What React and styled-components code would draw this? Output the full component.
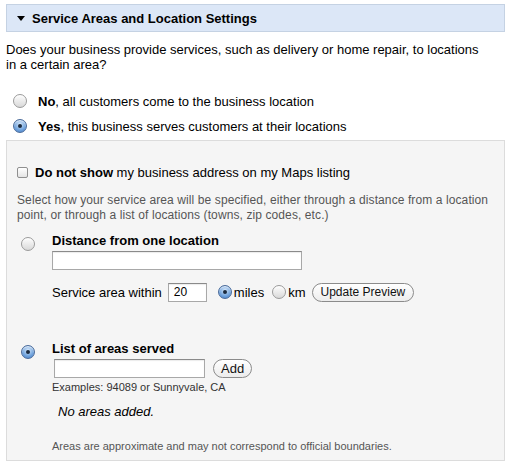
import React from "react";
import styled, { createGlobalStyle, css } from "styled-components";

const GlobalStyle = createGlobalStyle`
    html, body {
        margin: 0;
        padding: 0;
        background: #fff;
    }
    body {
        font-family: "Liberation Sans", Arial, sans-serif;
        font-size: 13px;
        color: #000;
    }
`;

const Page = styled.div`
    width: 499px;
    padding: 4px 4px 8px 6px;
`;

const Header = styled.div`
    height: 26px;
    display: flex;
    align-items: center;
    background-color: #dce7f7;
    border: 1px solid #c5d2e3;
    font-weight: bold;
    font-size: 13px;
`;

const Triangle = styled.span`
    width: 0;
    height: 0;
    margin: 0 7px 0 10px;
    border-left: 4px solid transparent;
    border-right: 4px solid transparent;
    border-top: 5px solid #000;
`;

const Question = styled.p`
    margin: 10px 0 0;
    line-height: 15px;
`;

const RadioList = styled.div`
    margin-top: 20px;
    display: flex;
    flex-direction: column;
    gap: 7px;
`;

const RadioRow = styled.label`
    display: flex;
    align-items: center;
    height: 18px;
    padding-left: 7px;
    gap: 11px;
`;

const Radio = styled.span`
    display: block;
    flex: none;
    position: relative;
    width: 12px;
    height: 12px;
    border-radius: 50%;
    border: 1px solid #9a9a9a;
    background: linear-gradient(#fdfdfd, #d9d9d9);
    box-shadow: inset 0 1px 1px rgba(255, 255, 255, 0.8);
    ${(props) =>
        props.checked &&
        css`
            border-color: #4a6b9a;
            background: radial-gradient(circle at 50% 35%, #d6e8fb, #6fa2dc 60%, #3d78c4);
            &::after {
                content: "";
                position: absolute;
                left: 4px;
                top: 4px;
                width: 4px;
                height: 4px;
                border-radius: 50%;
                background: #1b2a3e;
            }
        `}
`;

const Panel = styled.div`
    margin-top: 5px;
    background-color: #f5f5f5;
    border: 1px solid #dcdcdc;
    padding: 23px 10px 7px 10px;
`;

const CheckRow = styled.label`
    display: flex;
    align-items: center;
    height: 16px;
    gap: 7px;
`;

const Checkbox = styled.span`
    flex: none;
    width: 9px;
    height: 9px;
    border: 1px solid #8f8f8f;
    border-radius: 2px;
    background: linear-gradient(#ffffff, #e4e4e4);
`;

const Help = styled.p`
    margin: 13px 0 0;
    line-height: 15px;
    font-size: 12px;
    color: #555;
    letter-spacing: 0.1px;
`;

const Option = styled.div`
    display: flex;
    margin-top: ${(props) => props.gap}px;
`;

const OptionRadio = styled.div`
    width: 31px;
    flex: none;
    padding: 4px 0 0 4px;
`;

const OptionBody = styled.div`
    display: flex;
    flex-direction: column;
    align-items: flex-start;
`;

const OptionTitle = styled.div`
    font-weight: bold;
    line-height: 16px;
`;

const TextInput = styled.div`
    box-sizing: border-box;
    width: ${(props) => props.width}px;
    height: 19px;
    margin-left: ${(props) => props.indent || 0}px;
    background: #fff;
    border: 1px solid #a8a8a8;
    border-top-color: #8a8a8a;
    box-shadow: inset 0 1px 1px rgba(0, 0, 0, 0.08);
    font-size: 12px;
    line-height: 17px;
    padding-left: 5px;
`;

const Field = styled.div`
    margin-top: 2px;
    display: flex;
    align-items: center;
    gap: 8px;
`;

const WithinRow = styled.div`
    margin-top: 12px;
    height: 20px;
    display: flex;
    align-items: center;
`;

const UnitLabel = styled.label`
    display: flex;
    align-items: center;
    gap: 2px;
    margin-left: ${(props) => props.offset}px;
`;

const PillButton = styled.button`
    height: 19px;
    margin-left: ${(props) => props.offset || 0}px;
    padding: 0 ${(props) => props.pad || 8}px;
    border: 1px solid #8b8b8b;
    border-radius: 10px;
    background: linear-gradient(#ffffff, #ececec);
    font-family: "Liberation Sans", Arial, sans-serif;
    font-size: ${(props) => props.size || 12}px;
    color: #111;
    line-height: 17px;
`;

const Examples = styled.div`
    margin-top: 3px;
    font-size: 11px;
    line-height: 13px;
    color: #333;
`;

const Empty = styled.div`
    margin-top: 10px;
    margin-left: 6px;
    font-style: italic;
    line-height: 15px;
`;

const Note = styled.div`
    margin-top: 21px;
    font-size: 11px;
    line-height: 13px;
    color: #555;
`;

const App = () => {
    return (
        <Page>
            <GlobalStyle />
            <Header>
                <Triangle />
                Service Areas and Location Settings
            </Header>
            <Question>
                Does your business provide services, such as delivery or home repair, to locations
                <br />
                in a certain area?
            </Question>
            <RadioList>
                <RadioRow>
                    <Radio />
                    <span>
                        <b>No</b>, all customers come to the business location
                    </span>
                </RadioRow>
                <RadioRow>
                    <Radio checked />
                    <span>
                        <b>Yes</b>, this business serves customers at their locations
                    </span>
                </RadioRow>
            </RadioList>
            <Panel>
                <CheckRow>
                    <Checkbox />
                    <span>
                        <b>Do not show</b> my business address on my Maps listing
                    </span>
                </CheckRow>
                <Help>
                    Select how your service area will be specified, either through a distance from a location
                    <br />
                    point, or through a list of locations (towns, zip codes, etc.)
                </Help>
                <Option gap={10}>
                    <OptionRadio>
                        <Radio />
                    </OptionRadio>
                    <OptionBody>
                        <OptionTitle>Distance from one location</OptionTitle>
                        <Field>
                            <TextInput width={250} />
                        </Field>
                        <WithinRow>
                            Service area within
                            <TextInput width={39} indent={6}>20</TextInput>
                            <UnitLabel offset={11}>
                                <Radio checked />
                                miles
                            </UnitLabel>
                            <UnitLabel offset={8}>
                                <Radio />
                                km
                            </UnitLabel>
                            <PillButton offset={6}>Update Preview</PillButton>
                        </WithinRow>
                    </OptionBody>
                </Option>
                <Option gap={39}>
                    <OptionRadio>
                        <Radio checked />
                    </OptionRadio>
                    <OptionBody>
                        <OptionTitle>List of areas served</OptionTitle>
                        <Field>
                            <TextInput width={151} indent={2} />
                            <PillButton size={13} pad={7}>Add</PillButton>
                        </Field>
                        <Examples>Examples: 94089 or Sunnyvale, CA</Examples>
                        <Empty>No areas added.</Empty>
                        <Note>Areas are approximate and may not correspond to official boundaries.</Note>
                    </OptionBody>
                </Option>
            </Panel>
        </Page>
    );
};

export default App;
